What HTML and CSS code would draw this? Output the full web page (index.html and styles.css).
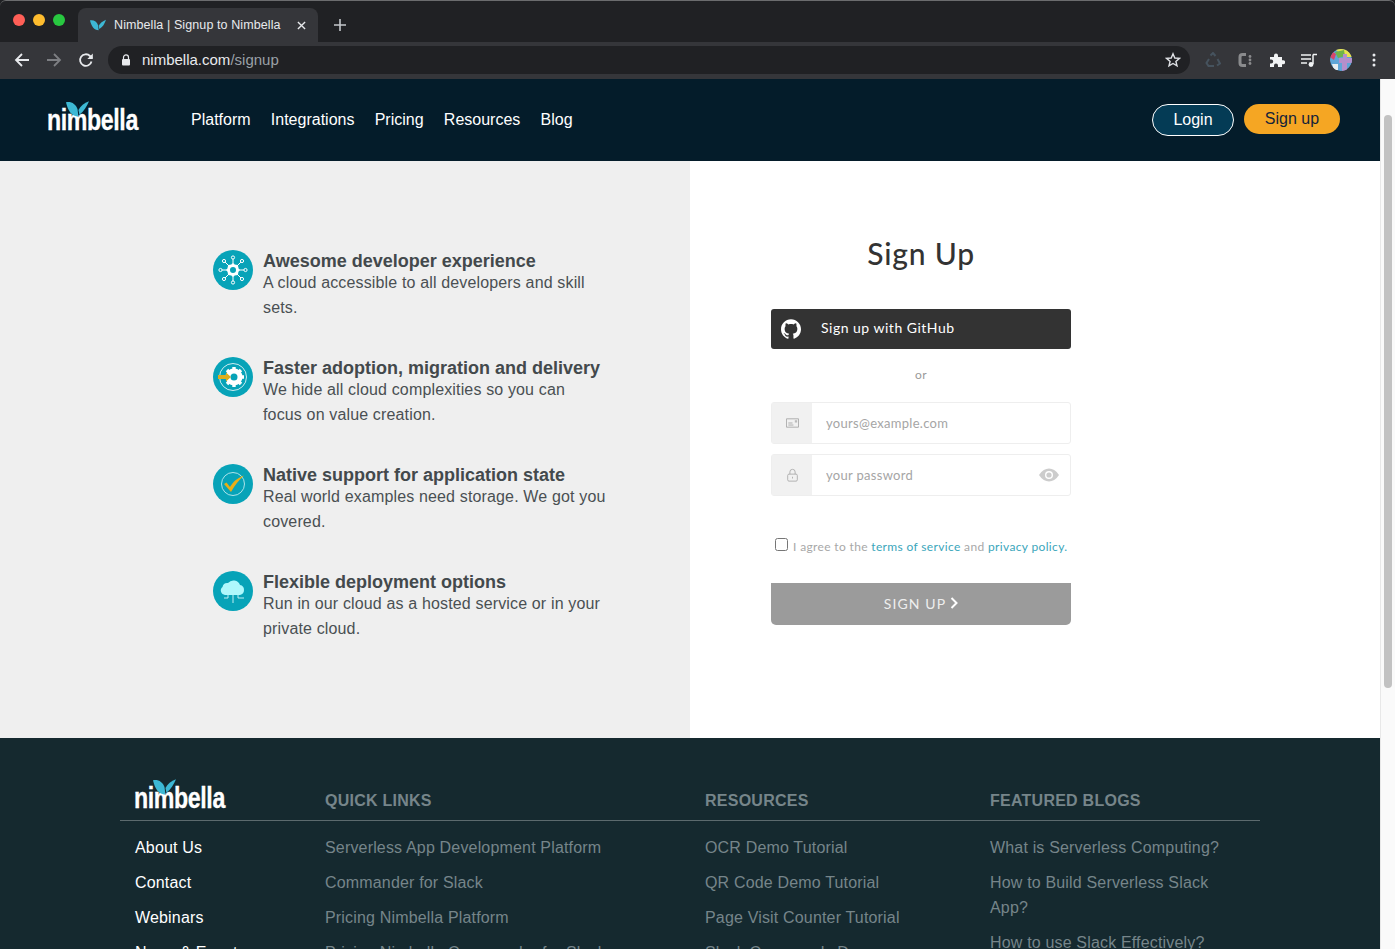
FILE: index.html
```html
<!DOCTYPE html>
<html lang="en">
<head>
  <meta charset="UTF-8" />
  <title>Nimbella | Signup to Nimbella</title>
  <link rel="stylesheet" href="styles.css">
</head>
<body>
  <!-- browser window -->
  <div class="tabstrip">
    <div class="lights">
      <span class="light red"></span>
      <span class="light yellow"></span>
      <span class="light green"></span>
    </div>
    <div class="tab">
      <svg class="favicon" viewBox="0 0 24 16"><path d="M0 1C6 0 10 3 12 8L13 16C6 16 2 10 0 1Z" fill="#3db8d4"/><path d="M13 9C15 5 19 2 24 0C22 6 19 11 14 14Z" fill="#3db8d4"/></svg>
      <span class="tab-title">Nimbella | Signup to Nimbella</span>
      <svg class="tab-close" viewBox="0 0 10 10"><path d="M1 1L9 9M9 1L1 9" stroke="#e8eaed" stroke-width="1.5"/></svg>
    </div>
    <svg class="tab-new" viewBox="0 0 12 12"><path d="M6 0V12M0 6H12" stroke="#c4c7cb" stroke-width="1.6"/></svg>
  </div>
  <div class="toolbar">
    <svg class="tool" viewBox="0 0 16 16"><path d="M15 8H2M8 2L2 8L8 14" fill="none" stroke="#e8eaed" stroke-width="1.8"/></svg>
    <svg class="tool" viewBox="0 0 16 16"><path d="M1 8H14M8 2L14 8L8 14" fill="none" stroke="#7d7f83" stroke-width="1.8"/></svg>
    <svg class="tool" viewBox="0 0 16 16"><path d="M13.5 9.500A5.800 5.800 0 1 1 12 4L14 6" fill="none" stroke="#e8eaed" stroke-width="1.8"/><path d="M14.800 1.500V7H9.300Z" fill="#e8eaed"/></svg>
    <div class="omnibox">
      <svg class="lock" viewBox="0 0 10 12"><path d="M2.500 5V3.400a2.500 2.500 0 0 1 5 0V5" fill="none" stroke="#e8eaed" stroke-width="1.2"/><rect x="1" y="5" width="8" height="6.500" rx="1" fill="#e8eaed"/></svg>
      <span class="url">nimbella.com<span class="url-path">/signup</span></span>
      <svg class="star" viewBox="0 0 16 16"><path d="M8 1.800L9.800 6L14.400 6.400L10.900 9.400L12 13.900L8 11.500L4 13.900L5.100 9.400L1.600 6.400L6.200 6Z" fill="none" stroke="#dfe1e5" stroke-width="1.4"/></svg>
    </div>
    <div class="extensions">
      <svg class="ext" viewBox="0 0 16 16"><path d="M5.500 3.500L8 1L10.500 4M12.500 7L15 11.500L12 13.500M9 14H3.500L1.500 11L4 7" fill="none" stroke="#46535e" stroke-width="2"/></svg>
      <svg class="ext" viewBox="0 0 16 16"><path d="M9 2.500H5.500Q3 2.500 3 5V11Q3 13.500 5.500 13.500H9" fill="none" stroke="#8a8b8d" stroke-width="3"/><circle cx="13" cy="4.500" r="1.400" fill="#8a8b8d"/><circle cx="13" cy="8" r="1.400" fill="#8a8b8d"/><circle cx="13" cy="11.500" r="1.400" fill="#8a8b8d"/></svg>
      <svg class="ext" viewBox="0 0 16 16"><path d="M1 5H5V3.500A2 2 0 0 1 9 3.500V5H13V8.200H14.200A2 2 0 0 1 14.200 12.200H13V15H9V13.500A2 2 0 0 0 5 13.500V15H1V11.500H2.200A2 2 0 0 0 2.200 7.500H1Z" fill="#f1f3f4"/></svg>
      <svg class="ext" viewBox="0 0 16 16"><path d="M0 3H10M0 7H10M0 11H6" stroke="#f1f3f4" stroke-width="1.500"/><path d="M12 2.500H16M12 2.500V12" stroke="#f1f3f4" stroke-width="1.500" fill="none"/><circle cx="10" cy="12.500" r="2.400" fill="#f1f3f4"/></svg>
      <svg class="avatar" viewBox="0 0 22 22">
        <circle cx="11" cy="11" r="11" fill="#5fa6d8"/>
        <path d="M5 0H22V8H14Z" fill="#e9e24e"/>
        <path d="M5 3L14 1L15 7L8 9Z" fill="#6fb34a"/>
        <path d="M9 9H13V5H17V9H22V14H17V22H12V14H9Z" fill="#b48fcb"/>
        <path d="M0 8L3 3L6 5L4 11Z" fill="#d8456b"/>
        <path d="M2 15H8V21H4Z" fill="#e8eef0"/>
      </svg>
      <svg class="kebab" viewBox="0 0 4 16"><circle cx="2" cy="3" r="1.500" fill="#e8eaed"/><circle cx="2" cy="8" r="1.500" fill="#e8eaed"/><circle cx="2" cy="13" r="1.500" fill="#e8eaed"/></svg>
    </div>
  </div>

  <div class="viewport">
    <div class="page">
      <header class="site-header">
        <a class="logo">
          <span class="logo-text">nimbella</span>
          <svg class="logo-wing" viewBox="0 0 24 16"><path d="M0 1C6 0 10 3 12 8L13 16C6 16 2 10 0 1Z" fill="#3db8d4"/><path d="M13 9C15 5 19 2 24 0C22 5 19 10 14 14Z" fill="#3db8d4"/></svg>
        </a>
        <nav class="site-nav">
          <a>Platform</a>
          <a>Integrations</a>
          <a>Pricing</a>
          <a>Resources</a>
          <a>Blog</a>
        </nav>
        <div class="header-actions">
          <a class="btn-login">Login</a>
          <a class="btn-signup">Sign up</a>
        </div>
      </header>

      <main class="signup">
        <section class="benefits">
          <div class="benefit">
            <svg class="benefit-icon" viewBox="0 0 40 40">
              <circle cx="20" cy="20" r="20" fill="#07a3b8"/>
              <g stroke="#fff" stroke-width="1" fill="none">
                <path d="M20 20V8M20 20V32M20 20H8M20 20H32M20 20L11.500 11.500M20 20L28.500 11.500M20 20L11.500 28.500M20 20L28.500 28.500"/>
                <circle cx="20" cy="7.500" r="1.600" fill="#07a3b8"/><circle cx="20" cy="32.500" r="1.600" fill="#07a3b8"/>
                <circle cx="7.500" cy="20" r="1.600" fill="#07a3b8"/><circle cx="32.500" cy="20" r="1.600" fill="#07a3b8"/>
                <circle cx="11" cy="11" r="1.600" fill="#07a3b8"/><circle cx="29" cy="11" r="1.600" fill="#07a3b8"/>
                <circle cx="11" cy="29" r="1.600" fill="#07a3b8"/><circle cx="29" cy="29" r="1.600" fill="#07a3b8"/>
              </g>
              <path d="M20 13.500V26.500M13.500 20H26.500M15.400 15.400L24.600 24.600M24.600 15.400L15.400 24.600" stroke="#fff" stroke-width="2.200"/>
              <circle cx="20" cy="20" r="4.500" fill="#07a3b8" stroke="#fff" stroke-width="3"/>
            </svg>
            <div class="benefit-text">
              <h3>Awesome developer experience</h3>
              <p>A cloud accessible to all developers and skill sets.</p>
            </div>
          </div>
          <div class="benefit">
            <svg class="benefit-icon" viewBox="0 0 40 40">
              <circle cx="20" cy="20" r="20" fill="#07a3b8"/>
              <circle cx="20" cy="20" r="13.500" fill="none" stroke="#fff" stroke-width=".8"/>
              <circle cx="21" cy="20" r="6" fill="none" stroke="#fff" stroke-width="5"/>
              <path d="M21 10V13M21 27V30M11 20H14M28 20H31M14 13L16 15M28 13L26 15M14 27L16 25M28 27L26 25" stroke="#fff" stroke-width="3.400"/>
              <path d="M5 18H13V15.500L18 20L13 24.500V22H5Z" fill="#dcae1d"/>
            </svg>
            <div class="benefit-text">
              <h3>Faster adoption, migration and delivery</h3>
              <p>We hide all cloud complexities so you can focus on value creation.</p>
            </div>
          </div>
          <div class="benefit">
            <svg class="benefit-icon" viewBox="0 0 40 40">
              <circle cx="20" cy="20" r="20" fill="#07a3b8"/>
              <circle cx="20" cy="20" r="11.500" fill="none" stroke="#d5f3f5" stroke-width=".8"/>
              <path d="M11 20L13.500 18.500L17 23C20 18 24 14 31 11.500C26 16 22 21 18 28Z" fill="#e8ae17"/>
            </svg>
            <div class="benefit-text">
              <h3>Native support for application state</h3>
              <p>Real world examples need storage. We got you covered.</p>
            </div>
          </div>
          <div class="benefit">
            <svg class="benefit-icon" viewBox="0 0 40 40">
              <circle cx="20" cy="20" r="20" fill="#07a3b8"/>
              <path d="M12 24A4.500 4.500 0 0 1 9.500 16A5 5 0 0 1 15 12A7 7 0 0 1 27 14A5 5 0 0 1 31 19A5 5 0 0 1 27 24Z" fill="#aef8fc"/>
              <path d="M20 24V32M15 24V27H11M25 24V27H31" fill="none" stroke="#d5f6f8" stroke-width=".9"/>
            </svg>
            <div class="benefit-text">
              <h3>Flexible deployment options</h3>
              <p>Run in our cloud as a hosted service or in your private cloud.</p>
            </div>
          </div>
        </section>

        <section class="auth">
          <h2>Sign Up</h2>
          <a class="btn-github">
            <svg viewBox="0 0 24 24"><path fill="#fff" d="M12 .297c-6.630 0-12 5.373-12 12 0 5.303 3.438 9.800 8.205 11.385.6.113.82-.258.82-.577 0-.285-.01-1.040-.015-2.040-3.338.724-4.042-1.610-4.042-1.610C4.422 18.070 3.633 17.700 3.633 17.700c-1.087-.744.084-.729.084-.729 1.205.084 1.838 1.236 1.838 1.236 1.070 1.835 2.809 1.305 3.495.998.108-.776.417-1.305.76-1.605-2.665-.3-5.466-1.332-5.466-5.930 0-1.310.465-2.380 1.235-3.220-.135-.303-.54-1.523.105-3.176 0 0 1.005-.322 3.300 1.230.96-.267 1.980-.399 3-.405 1.020.006 2.040.138 3 .405 2.280-1.552 3.285-1.230 3.285-1.230.645 1.653.24 2.873.12 3.176.765.84 1.230 1.910 1.230 3.220 0 4.610-2.805 5.625-5.475 5.920.42.36.81 1.096.81 2.220 0 1.606-.015 2.896-.015 3.286 0 .315.21.69.825.57C20.565 22.092 24 17.592 24 12.297c0-6.627-5.373-12-12-12"/></svg>
            <span class="btn-github-label">Sign up with GitHub</span>
          </a>
          <div class="or">or</div>
          <label class="field">
            <span class="field-icon">
              <svg viewBox="0 0 14 12"><path d="M.5 1.500H13.500V10.500H.5Z" fill="none" stroke="#aaa"/><path d="M2.500 6H7M2.500 8.200H8" stroke="#aaa"/><rect x="9.500" y="3" width="2.500" height="2.500" fill="#bbb"/></svg>
            </span>
            <input type="text" placeholder="yours@example.com" />
          </label>
          <label class="field">
            <span class="field-icon">
              <svg viewBox="0 0 12 16"><path d="M3 7V4.500a3 3 0 0 1 6 0V7" fill="none" stroke="#aaa"/><rect x=".5" y="7" width="11" height="8" rx="1.500" fill="none" stroke="#aaa"/><rect x="5.500" y="10" width="1" height="2" fill="#aaa"/></svg>
            </span>
            <input type="text" placeholder="your password" />
            <svg class="eye" viewBox="0 0 20 14"><path d="M0 7C3 2.500 6.500 .5 10 .5S17 2.500 20 7C17 11.500 13.500 13.500 10 13.500S3 11.500 0 7Z" fill="#ccc"/><circle cx="10" cy="7" r="4" fill="#fff"/><circle cx="10" cy="7" r="2.600" fill="#ccc"/></svg>
          </label>
          <div class="terms">
            <input type="checkbox" />
            <span>I agree to the <a>terms of service</a> and <a>privacy policy.</a></span>
          </div>
          <a class="btn-submit">SIGN UP
            <svg viewBox="0 0 8 12"><path d="M1.500 1L6.500 6L1.500 11" fill="none" stroke="#fff" stroke-width="2"/></svg>
          </a>
        </section>
      </main>

      <footer class="site-footer">
        <div class="footer-grid">
          <div class="footer-col">
            <div class="footer-head">
              <a class="logo">
                <span class="logo-text">nimbella</span>
                <svg class="logo-wing" viewBox="0 0 24 16"><path d="M0 1C6 0 10 3 12 8L13 16C6 16 2 10 0 1Z" fill="#3db8d4"/><path d="M13 9C15 5 19 2 24 0C22 5 19 10 14 14Z" fill="#3db8d4"/></svg>
              </a>
            </div>
            <ul class="footer-links main-links">
              <li>About Us</li>
              <li>Contact</li>
              <li>Webinars</li>
              <li>News &amp; Events</li>
            </ul>
          </div>
          <div class="footer-col">
            <div class="footer-head">QUICK LINKS</div>
            <ul class="footer-links">
              <li>Serverless App Development Platform</li>
              <li>Commander for Slack</li>
              <li>Pricing Nimbella Platform</li>
              <li>Pricing Nimbella Commander for Slack</li>
            </ul>
          </div>
          <div class="footer-col">
            <div class="footer-head">RESOURCES</div>
            <ul class="footer-links">
              <li>OCR Demo Tutorial</li>
              <li>QR Code Demo Tutorial</li>
              <li>Page Visit Counter Tutorial</li>
              <li>Slack Commands Demo</li>
            </ul>
          </div>
          <div class="footer-col">
            <div class="footer-head">FEATURED BLOGS</div>
            <ul class="footer-links">
              <li>What is Serverless Computing?</li>
              <li>How to Build Serverless Slack App?</li>
              <li>How to use Slack Effectively?</li>
            </ul>
          </div>
        </div>
      </footer>
    </div>

    <div class="scrollbar">
      <div class="scrollbar-thumb"></div>
    </div>
  </div>
</body>
</html>
```

FILE: styles.css
```css
html, body {
  height: 100%;
  margin: 0;
  padding: 0;
  overflow: hidden;
}

body {
  display: flex;
  flex-direction: column;
  font-family: "Liberation Sans", Arial, sans-serif;
  background-color: #202124;
}

/* browser window */
.tabstrip {
  display: flex;
  align-items: flex-end;
  flex: none;
  height: 42px;
  background: #202124;
  border-top: 1px solid #6b6c6e;
  border-radius: 6px 6px 0 0;
  box-sizing: border-box;
}

.lights {
  display: flex;
  gap: 8px;
  align-self: flex-start;
  margin: 13px 0 0 13px;
  width: 65px;
}

.light {
  width: 12px;
  height: 12px;
  border-radius: 50%;
}

.red { background: #ff5f57; }
.yellow { background: #febc2e; }
.green { background: #28c840; }

.tab {
  display: flex;
  align-items: center;
  width: 240px;
  height: 34px;
  background: #35363a;
  border-radius: 8px 8px 0 0;
  box-sizing: border-box;
  padding: 0 12px;
}

.favicon {
  width: 16px;
  height: 12px;
  margin-right: 8px;
}

.tab-title {
  flex: 1;
  font-size: 12.500px;
  letter-spacing: 0.1px;
  color: #e8eaed;
  white-space: nowrap;
}

.tab-close {
  width: 9px;
  height: 9px;
}

.tab-new {
  width: 12px;
  height: 12px;
  margin: 0 0 11px 16px;
}

.toolbar {
  display: flex;
  align-items: center;
  flex: none;
  height: 37px;
  background: #35363a;
  box-sizing: border-box;
  padding: 0 15px 1px 14px;
}

.tool {
  width: 16px;
  height: 16px;
  margin-right: 16px;
}

.omnibox {
  display: flex;
  align-items: center;
  flex: none;
  width: 1082px;
  height: 28px;
  margin-left: -2px;
  background: #202124;
  border-radius: 14px;
  box-sizing: border-box;
  padding: 0 9px 0 13px;
}

.lock {
  width: 10px;
  height: 12px;
  margin-right: 11px;
}

.url {
  flex: 1;
  font-size: 15px;
  color: #e8eaed;
  padding-bottom: 1px;
}

.url-path {
  color: #9aa0a6;
}

.star {
  width: 16px;
  height: 16px;
}

.extensions {
  display: flex;
  align-items: center;
  flex: 1;
  margin-left: 15px;
  gap: 16px;
}

.ext {
  width: 16px;
  height: 16px;
}

.avatar {
  width: 22px;
  height: 22px;
  margin-left: -3px;
  border-radius: 50%;
}

.kebab {
  width: 4px;
  height: 16px;
  margin-left: 4px;
}

.viewport {
  display: flex;
  flex: 1;
  min-height: 0;
}

.page {
  flex: 1;
  min-width: 0;
  overflow: hidden;
}

.scrollbar {
  flex: none;
  width: 15px;
  background: #fafafa;
  border-left: 1px solid #e8e8e8;
  box-sizing: border-box;
}

.scrollbar-thumb {
  width: 8px;
  height: 573px;
  margin: 36px 0 0 3px;
  background: #c2c2c2;
  border-radius: 4px;
}

/* logo */
.logo {
  position: relative;
  display: block;
  width: 91px;
  height: 32px;
}

.logo-text {
  position: absolute;
  left: -1px;
  bottom: 0;
  font-size: 29px;
  line-height: 30px;
  font-weight: bold;
  color: #fff;
  letter-spacing: -0.5px;
  -webkit-text-stroke: 0.3px #fff;
  transform: scaleX(0.8);
  transform-origin: left bottom;
}

.logo-wing {
  position: absolute;
  left: 18px;
  top: -2px;
  width: 23px;
  height: 16px;
}

/* header */
.site-header {
  display: flex;
  align-items: center;
  height: 82px;
  background: #041c2a;
  padding: 0 40px 0 48px;
}

.site-header .logo {
  margin-bottom: 2px;
}

.site-nav {
  display: flex;
  gap: 20.250px;
  margin-left: 52px;
  font-size: 16px;
  color: #fff;
}

.header-actions {
  display: flex;
  align-items: flex-start;
  gap: 10px;
  margin-left: auto;
  font-size: 16px;
}

.btn-login {
  width: 82px;
  height: 32px;
  line-height: 30px;
  text-align: center;
  color: #fff;
  background: #043b55;
  border: 1px solid #fff;
  border-radius: 16px;
  box-sizing: border-box;
}

.btn-signup {
  width: 96px;
  height: 30px;
  line-height: 30px;
  text-align: center;
  color: #14233a;
  background: #f5a623;
  border-radius: 15px;
}

/* sign up */
.signup {
  display: flex;
  height: 577px;
  background: #fff;
}

.benefits {
  flex: none;
  width: 690px;
  background: #efefef;
  box-sizing: border-box;
  padding: 89px 0 0 213px;
}

.benefit {
  display: flex;
  gap: 10px;
  margin-bottom: 37px;
}

.benefit-icon {
  flex: none;
  width: 40px;
  height: 40px;
}

.benefit-text {
  width: 345px;
}

.benefit-text h3 {
  margin: 0;
  font-size: 18px;
  line-height: 22px;
  color: #43494c;
}

.benefit-text p {
  margin: -2px 0 0;
  font-size: 16px;
  line-height: 25px;
  letter-spacing: 0.15px;
  color: #4a5053;
}

.auth {
  width: 300px;
  margin-left: 81px;
  font-family: Lato, sans-serif;
}

.auth h2 {
  margin: 72px 0 36px;
  font-size: 30px;
  line-height: 40px;
  font-weight: 500;
  text-align: center;
  letter-spacing: 0.8px;
  color: #333;
}

.btn-github {
  display: flex;
  align-items: center;
  height: 40px;
  background: #333;
  border-radius: 3px;
  font-size: 14px;
  letter-spacing: 0.5px;
  color: #fff;
  padding-left: 10px;
}

.btn-github svg {
  width: 20px;
  height: 20px;
  margin-right: 20px;
}

.btn-github-label {
  padding-bottom: 3px;
}

.or {
  margin: 18px 0 19px;
  font-size: 12px;
  line-height: 16px;
  letter-spacing: 0.5px;
  text-align: center;
  color: #9a9a9a;
}

.field {
  display: flex;
  align-items: center;
  height: 42px;
  margin-bottom: 10px;
  border: 1px solid #eee;
  border-radius: 3px;
  box-sizing: border-box;
}

.field-icon {
  display: flex;
  align-items: center;
  justify-content: center;
  flex: none;
  width: 40px;
  height: 100%;
  background: #f1f1f1;
}

.field-icon svg {
  width: 13px;
  height: 14px;
}

.field input {
  flex: 1;
  min-width: 0;
  border: none;
  outline: none;
  padding: 0 0 1px 14px;
  font-family: Lato, sans-serif;
  font-size: 13px;
  letter-spacing: 0.3px;
}

.field input::placeholder {
  color: #a5a5a5;
}

.eye {
  flex: none;
  width: 20px;
  height: 14px;
  margin-right: 11px;
}

.terms {
  display: flex;
  align-items: center;
  margin: 42px 0 28px;
  padding-left: 4px;
  font-size: 12px;
  line-height: 16px;
  letter-spacing: 0.35px;
  color: #a8a8a8;
}

.terms input {
  width: 13px;
  height: 13px;
  margin: 0 5px 4px 0;
}

.terms a {
  color: #3aa6bb;
}

.btn-submit {
  display: flex;
  align-items: center;
  justify-content: center;
  gap: 4px;
  height: 42px;
  box-sizing: border-box;
  padding-bottom: 2px;
  background: #9b9b9b;
  border-radius: 0 0 5px 5px;
  font-size: 14px;
  letter-spacing: 1.100px;
  color: #eee;
}

.btn-submit svg {
  width: 8px;
  height: 12px;
}

/* footer */
.site-footer {
  height: 300px;
  background: #15292f;
  padding-top: 40px;
}

.footer-grid {
  display: grid;
  grid-template-columns: 190px 380px 285px 285px;
  width: 1140px;
  margin-left: 120px;
}

.footer-head {
  display: flex;
  align-items: flex-end;
  height: 43px;
  box-sizing: border-box;
  padding: 0 15px 8px;
  border-bottom: 1px solid #5c6a6e;
  font-size: 16px;
  line-height: 22px;
  letter-spacing: 0.25px;
  font-weight: bold;
  color: #76858a;
}

.footer-head .logo {
  flex: none;
  margin-bottom: -1px;
}

.footer-links {
  list-style-type: none;
  margin: 0;
  padding: 14px 15px 0;
  font-size: 16px;
  line-height: 25px;
  letter-spacing: 0.17px;
  color: #76858a;
}

.footer-links li {
  margin-bottom: 10px;
}

.main-links {
  color: #fff;
}
```
